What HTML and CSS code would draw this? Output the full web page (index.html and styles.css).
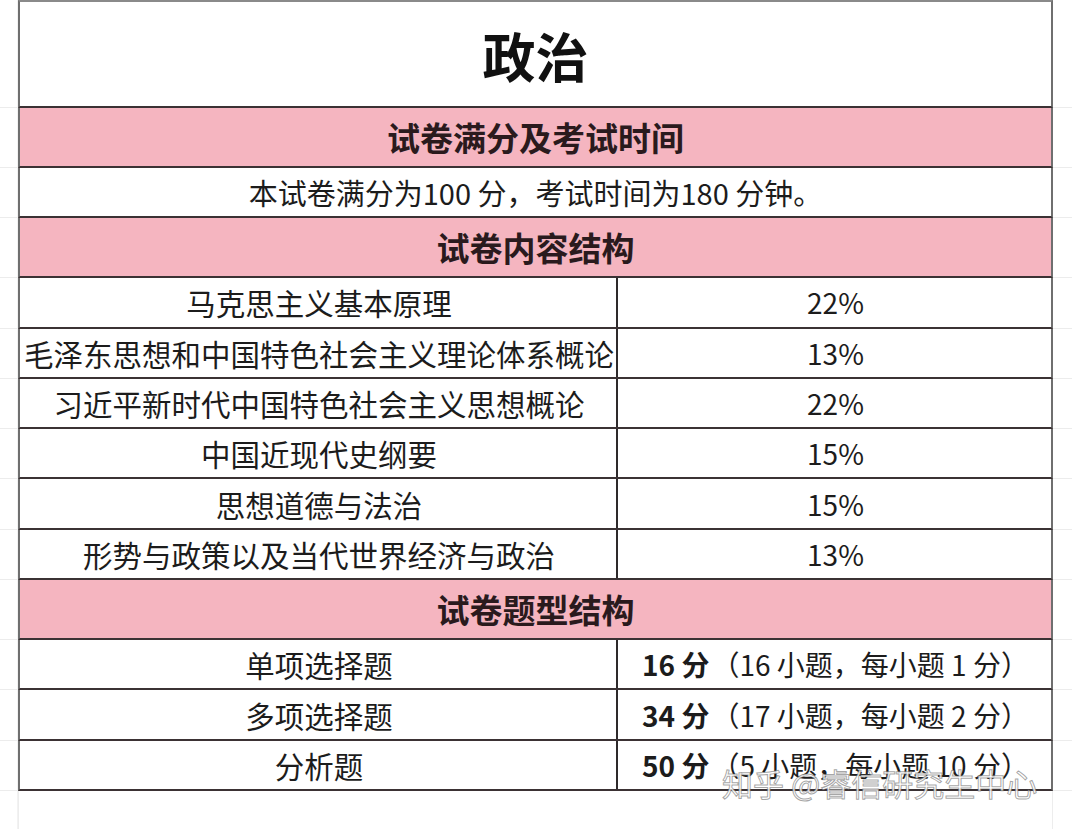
FILE: index.html
```html
<!DOCTYPE html>
<html lang="zh-CN">
<head>
<meta charset="utf-8">
<title>政治</title>
<link rel="stylesheet" href="styles.css">
</head>
<body>
<div class="sheet">
  <div class="line top"><div class="gl"></div><div class="cells"><div class="c full title">政治</div></div><div class="gr"></div></div>
  <div class="line head"><div class="gl"></div><div class="cells"><div class="c full">试卷满分及考试时间</div></div><div class="gr"></div></div>
  <div class="line body"><div class="gl"></div><div class="cells"><div class="c full">本试卷满分为100 分，考试时间为180 分钟。</div></div><div class="gr"></div></div>
  <div class="line head"><div class="gl"></div><div class="cells"><div class="c full">试卷内容结构</div></div><div class="gr"></div></div>
  <div class="line body"><div class="gl"></div><div class="cells"><div class="c left">马克思主义基本原理</div><div class="c right">22%</div></div><div class="gr"></div></div>
  <div class="line body"><div class="gl"></div><div class="cells"><div class="c left">毛泽东思想和中国特色社会主义理论体系概论</div><div class="c right">13%</div></div><div class="gr"></div></div>
  <div class="line body"><div class="gl"></div><div class="cells"><div class="c left">习近平新时代中国特色社会主义思想概论</div><div class="c right">22%</div></div><div class="gr"></div></div>
  <div class="line body"><div class="gl"></div><div class="cells"><div class="c left">中国近现代史纲要</div><div class="c right">15%</div></div><div class="gr"></div></div>
  <div class="line body"><div class="gl"></div><div class="cells"><div class="c left">思想道德与法治</div><div class="c right">15%</div></div><div class="gr"></div></div>
  <div class="line body"><div class="gl"></div><div class="cells"><div class="c left">形势与政策以及当代世界经济与政治</div><div class="c right">13%</div></div><div class="gr"></div></div>
  <div class="line head"><div class="gl"></div><div class="cells"><div class="c full">试卷题型结构</div></div><div class="gr"></div></div>
  <div class="line body"><div class="gl"></div><div class="cells"><div class="c left">单项选择题</div><div class="c right"><b>16 分</b>（16 小题，每小题 1 分）</div></div><div class="gr"></div></div>
  <div class="line body"><div class="gl"></div><div class="cells"><div class="c left">多项选择题</div><div class="c right"><b>34 分</b>（17 小题，每小题 2 分）</div></div><div class="gr"></div></div>
  <div class="line body last"><div class="gl"></div><div class="cells"><div class="c left">分析题</div><div class="c right"><b>50 分</b>（5 小题，每小题 10 分）</div></div><div class="gr"></div></div>
  <div class="line tail"><div class="gl"></div><div class="cells blank"></div><div class="gr"></div></div>
  <div class="watermark">知乎 @睿信研究生中心</div>
</div>
</body>
</html>
```

FILE: styles.css
```css
* { box-sizing: border-box; }
html, body { margin: 0; padding: 0; background: #ffffff; }
body {
  font-family: "Noto Sans CJK SC", "Noto Sans", sans-serif;
  color: #1c1c1c;
  width: 1072px;
  height: 829px;
  overflow: hidden;
}
.sheet { position: relative; width: 1072px; }
.line { display: flex; }
.gl { width: 18px; border-bottom: 1px solid #ececec; border-right: 1px solid #f2f2f2; }
.gr { flex: 1; border-bottom: 1px solid #ececec; }
.cells {
  width: 1035px;
  display: flex;
  border-left: 2px solid #6f6f6f;
  border-right: 2px solid #6f6f6f;
  border-bottom: 2px solid #3b3234;
}
.c {
  display: flex;
  align-items: center;
  justify-content: center;
  white-space: nowrap;
}
.full { flex: 1; }
.left { width: 598px; border-right: 2px solid #2e2a2b; font-size: 29.5px; padding-left: 2px; }
.right { flex: 1; font-size: 28px; padding-left: 2px; }
.right b { font-weight: 700; margin-right: 2px; }

.top .cells { border-top: 2px solid #8a8a8a; height: 108px; }
.title { font-size: 53px; font-weight: 700; color: #111; padding-top: 2px; }

.head .cells { background: #f5b5c0; height: 60px; }
.head .c { font-size: 33px; font-weight: 700; color: #2a1a1d; }

.body .cells { height: 50.3px; }
.body .full { font-size: 29px; }

.tail .cells { border-bottom: none; border-left: 1px solid #ededed; border-right: 1px solid #ededed; height: 40px; }
.tail .gl, .tail .gr { border-bottom: none; }

.watermark {
  position: absolute;
  left: 722px;
  top: 760px;
  font-size: 31px;
  color: rgba(255, 255, 255, 0.85);
  -webkit-text-stroke: 1px rgba(90, 90, 90, 0.55);
  white-space: nowrap;
}
```
